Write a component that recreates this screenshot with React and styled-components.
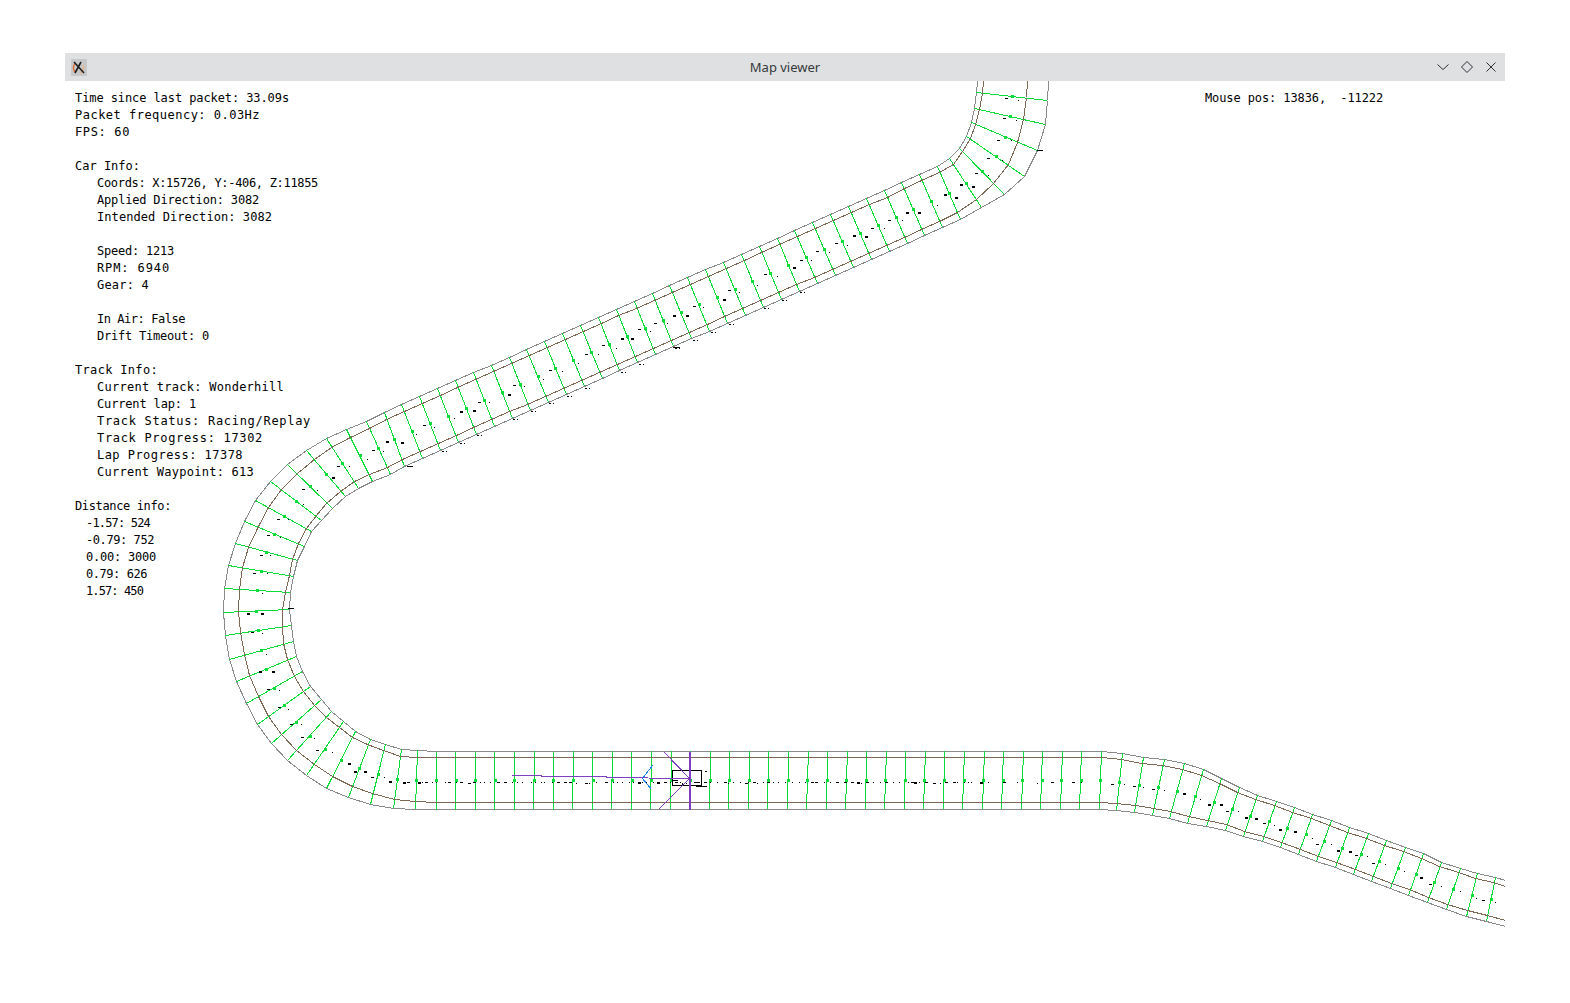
import React from 'react';
import styled, { createGlobalStyle } from 'styled-components';

const GlobalStyle = createGlobalStyle`
  html, body {
    margin: 0;
    padding: 0;
    background: #fff;
  }
`;

const Page = styled.div`
  width: 1570px;
  height: 1003px;
  padding: 53px 65px 0 65px;
  box-sizing: border-box;
  overflow: hidden;
`;

const Window = styled.div`
  display: flex;
  flex-direction: column;
  width: 1440px;
  height: 898px;
  background: #fff;
`;

const TitleBar = styled.div`
  display: flex;
  align-items: center;
  height: 28px;
  padding: 0 6px;
  background: #dee0e2;
  flex: none;
`;

const TitleSide = styled.div`
  display: flex;
  flex: 1;
  align-items: center;
  justify-content: ${p => (p.$end ? 'flex-end' : 'flex-start')};
  gap: 8px;
`;

const TitleIcon = styled.svg`
  width: 16px;
  height: 17px;
  flex: none;
`;

const Title = styled.div`
  font-family: "Noto Sans", sans-serif;
  font-size: 13px;
  color: #35393c;
`;

const ButtonIcon = styled.svg`
  width: 16px;
  height: 16px;
  fill: none;
  stroke: #2e3134;
  stroke-width: 1;
`;

const Canvas = styled.div`
  position: relative;
  flex: 1;
  display: flex;
  justify-content: space-between;
  align-items: flex-start;
  padding: 9px 122px 0 10px;
`;

const TrackLayer = styled.svg`
  position: absolute;
  left: 0;
  top: 0;
  width: 1440px;
  height: 870px;
  shape-rendering: crispEdges;
`;

const Hud = styled.div`
  position: relative;
  display: flex;
  flex-direction: column;
`;

const HudLine = styled.div`
  height: 17px;
  line-height: 17px;
  padding-left: ${p => p.$indent || 0}px;
  font-family: "DejaVu Sans Mono", monospace;
  font-size: 12px;
  color: #000;
  white-space: pre;
  letter-spacing: ${p => p.$spacing || 0}px;
`;

const CHAR_W = 7.224;

const hudLines = [
  ['Time since last packet: 33.09s', 0, 214],
  ['Packet frequency: 0.03Hz', 0, 185],
  ['FPS: 60', 0, 55],
  null,
  ['Car Info:', 0, 65],
  ['Coords: X:15726, Y:-406, Z:11855', 22, 221],
  ['Applied Direction: 3082', 22, 162],
  ['Intended Direction: 3082', 22, 175],
  null,
  ['Speed: 1213', 22, 77],
  ['RPM: 6940', 22, 73],
  ['Gear: 4', 22, 52],
  null,
  ['In Air: False', 22, 88],
  ['Drift Timeout: 0', 22, 112],
  null,
  ['Track Info:', 0, 83],
  ['Current track: Wonderhill', 22, 187],
  ['Current lap: 1', 22, 99],
  ['Track Status: Racing/Replay', 22, 214],
  ['Track Progress: 17302', 22, 166],
  ['Lap Progress: 17378', 22, 146],
  ['Current Waypoint: 613', 22, 157],
  null,
  ['Distance info:', 0, 96],
  ['-1.57: 524', 11, 64],
  ['-0.79: 752', 11, 68],
  ['0.00: 3000', 11, 70],
  ['0.79: 626', 11, 61],
  ['1.57: 450', 11, 57],
];

const spacingFor = (text, width) => width / text.length - CHAR_W;

// rungs: [ax, ay, bx, by, brown fraction from a, brown fraction from b]
const topCurve = [
  [976, 92.7, 1047.7, 100, 0.09, 0.3],
  [974.7, 108.3, 1045, 124.3, 0.07, 0.3],
  [971.7, 122.7, 1037.7, 150.7, 0.06, 0.31],
  [966.7, 136, 1024.3, 176, 0.07, 0.28],
  [959.3, 148.3, 1004.3, 194.3, 0.08, 0.23],
  [949.7, 158.7, 981.7, 207.7, 0.11, 0.17],
  [937.3, 166.7, 960.7, 219, 0.11, 0.13],
  [919.3, 174.3, 942.7, 227.7, 0.11, 0.12],
  [901.7, 182.3, 924.5, 235.5, 0.12, 0.12],
];

const line = (a, b, count) => {
  const rows = [];
  for (let i = 0; i < count; i++) {
    const t = i / (count - 1);
    rows.push([
      a[0] + (b[0] - a[0]) * t,
      a[1] + (b[1] - a[1]) * t,
      a[2] + (b[2] - a[2]) * t,
      a[3] + (b[3] - a[3]) * t,
      a[4],
      a[5],
    ]);
  }
  return rows;
};

const diagonal = line([884.3, 190.7, 907, 243.7, 0.12, 0.12], [384, 412.6, 404.7, 466, 0.12, 0.12], 29);

const leftCurve = [
  [366.7, 421.7, 390, 474, 0.13, 0.12],
  [346.7, 429.3, 372.7, 481, 0.15, 0.12],
  [326, 438.3, 358.3, 488.3, 0.18, 0.13],
  [306.7, 450.7, 345, 496.7, 0.2, 0.12],
  [287.7, 464.3, 332.3, 508.3, 0.22, 0.12],
  [270, 481, 321.7, 520, 0.23, 0.11],
  [255.7, 500, 311.7, 531.7, 0.23, 0.1],
  [244.3, 521, 304.3, 546, 0.23, 0.09],
  [235, 543.3, 297.7, 560.7, 0.22, 0.08],
  [228.3, 565, 293.3, 576.7, 0.22, 0.06],
  [224.3, 588.3, 290, 592.3, 0.23, 0.07],
  [223.3, 612.3, 289, 609.3, 0.23, 0.1],
  [225, 635, 291, 625.3, 0.23, 0.13],
  [229.3, 659, 293.3, 641.3, 0.23, 0.15],
  [236, 681.7, 296.7, 656, 0.23, 0.15],
  [246, 703.3, 302.7, 671.7, 0.22, 0.15],
  [257.3, 724, 310.7, 686, 0.21, 0.14],
  [271.7, 743.3, 321, 699.7, 0.2, 0.14],
  [287.7, 760, 331.7, 711.7, 0.2, 0.12],
  [306.7, 775.7, 343.3, 721.7, 0.2, 0.11],
  [326.7, 788.3, 355.7, 731, 0.2, 0.11],
  [348.3, 797.3, 370, 739, 0.18, 0.1],
  [370, 804, 385, 744.3, 0.17, 0.1],
  [393, 808, 401, 749, 0.14, 0.12],
  [415.3, 809, 417.3, 750.3, 0.13, 0.12],
];

const straight = line([436.3, 809, 436.3, 751, 0.12, 0.12], [1099, 809, 1101.5, 751, 0.12, 0.12], 35);

const rightBend = [
  [1116, 810, 1122.5, 753, 0.12, 0.12],
  [1134, 812, 1143, 757, 0.12, 0.12],
  [1152, 815, 1164, 759, 0.12, 0.12],
  [1169, 818, 1184, 763, 0.12, 0.12],
  [1187, 823, 1203, 769, 0.12, 0.12],
  [1206, 826, 1221, 778, 0.12, 0.12],
  [1225, 830, 1239, 787, 0.12, 0.12],
  [1243, 836, 1257, 795, 0.12, 0.12],
];

const rightRun = line([1262, 841, 1276, 801, 0.12, 0.12], [1390, 888, 1405, 847, 0.12, 0.12], 8);

const rightEnd = [
  [1408, 895, 1423, 853, 0.12, 0.12],
  [1427, 902, 1441.7, 862, 0.12, 0.12],
  [1446, 909, 1460, 868, 0.12, 0.12],
  [1466, 916, 1477, 873, 0.12, 0.12],
  [1486, 921, 1495, 877, 0.12, 0.12],
];

const drawnRungs = [
  ...topCurve,
  ...diagonal,
  ...leftCurve,
  ...straight,
  ...rightBend,
  ...rightRun,
  ...rightEnd,
];

const straightFrom = topCurve.length + diagonal.length + leftCurve.length;

const mix = (x0, y0, x1, y1, t) => [x0 + (x1 - x0) * t, y0 + (y1 - y0) * t];

// pixel centres, so lines land on one row of pixels as in the aliased original
const snap = v => Math.floor(v) + 0.5;

const toPoints = pts => pts.map(p => `${snap(p[0])},${snap(p[1])}`).join(' ');

// the edges run on past the first rung to the title bar, and to the window edge at the end
const grayA = [[977.5, 81], ...drawnRungs.map(r => [r[0], r[1]]), [1505, 926]];
const grayB = [[1048, 81], ...drawnRungs.map(r => [r[2], r[3]]), [1505, 880]];
const brownA = [[983, 81], ...drawnRungs.map(r => mix(r[0], r[1], r[2], r[3], r[4])), [1505, 920]];
const brownB = [[1027, 81], ...drawnRungs.map(r => mix(r[2], r[3], r[0], r[1], r[5])), [1505, 886]];

// seeded so the scatter of track samples stays the same on every load
let seed = 4127;
const rand = () => {
  seed = (seed * 16807) % 2147483647;
  return seed / 2147483647;
};

const buildDots = () => {
  const out = [];
  drawnRungs.forEach((r, i) => {
    if (i >= straightFrom && i < straightFrom + straight.length) return;
    const [mx, my] = mix(r[0], r[1], r[2], r[3], 0.5);
    const big = rand() > 0.75;
    if (rand() > 0.15) {
      out.push([mx - 5 - rand() * 4, my + 3 - rand() * 2, 3, big ? 2 : 1]);
    }
    out.push([mx + 4 + rand() * 3, my + 2 + rand() * 2, big ? 3 : 1, big ? 2 : 1]);
    if (i > 14 && i < 36 && rand() > 0.25) {
      out.push([r[2] + 1, r[3] + 1, 2, 1], [r[2] + 5, r[3] + 1, 1, 1]);
    }
  });
  for (let x = 418; x < 1100;) {
    const wide = rand();
    out.push([x, 782 + (rand() > 0.85 ? 1 : 0), wide > 0.5 ? 3 : 1, wide > 0.92 ? 2 : 1]);
    x += x > 970 ? 8 + rand() * 14 : 3 + rand() * 6;
  }
  return out;
};

const dots = buildDots();

const edgeDashes = [
  [1037, 150, 6],
  [288, 608, 6],
  [673, 347, 7],
  [407, 466, 6],
  [696, 786, 11],
  [705, 771, 2],
];

const App = () => (
  <Page>
    <GlobalStyle />
    <Window>
      <TitleBar>
        <TitleSide>
          <TitleIcon viewBox="0 0 16 17">
            <rect width="16" height="17" rx="1" fill="#c6c8ca" />
            <path d="M4 13 A6 6 0 0 1 5 4" fill="none" stroke="#e0703a" strokeWidth="1.5" />
            <path d="M12 6 A6 6 0 0 1 9 14" fill="none" stroke="#e8b48c" strokeWidth="1.5" />
            <path d="M3 3 L13 14 M4 14 L10 3" stroke="#1c1c1c" strokeWidth="1.6" fill="none" />
          </TitleIcon>
        </TitleSide>
        <Title>Map viewer</Title>
        <TitleSide $end>
          <ButtonIcon viewBox="0 0 16 16"><path d="M2.5 5.5 L8 10.5 L13.5 5.5" /></ButtonIcon>
          <ButtonIcon viewBox="0 0 16 16"><path d="M8 2.5 L13.5 8 L8 13.5 L2.5 8 Z" /></ButtonIcon>
          <ButtonIcon viewBox="0 0 16 16"><path d="M3.5 3.5 L12.5 12.5 M12.5 3.5 L3.5 12.5" /></ButtonIcon>
        </TitleSide>
      </TitleBar>
      <Canvas>
        <TrackLayer viewBox="65 81 1440 870">
          <polyline points={toPoints(grayA)} fill="none" stroke="#8a8a8a" />
          <polyline points={toPoints(grayB)} fill="none" stroke="#8a8a8a" />
          {drawnRungs.map((r, i) => (
            <line key={i} x1={snap(r[0])} y1={snap(r[1])} x2={snap(r[2])} y2={snap(r[3])} stroke="#0bdc3a" />
          ))}
          <polyline points={toPoints(brownA)} fill="none" stroke="#7d6a55" />
          <polyline points={toPoints(brownB)} fill="none" stroke="#7d6a55" />
          {drawnRungs.map((r, i) => {
            const [mx, my] = mix(r[0], r[1], r[2], r[3], 0.5);
            return <rect key={i} x={Math.round(mx - 1)} y={Math.round(my - 1)} width="3" height="3" fill="#0bdc3a" />;
          })}
          {dots.map((d, i) => (
            <rect key={i} x={Math.round(d[0])} y={Math.round(d[1])} width={d[2]} height={d[3]} fill="#000" />
          ))}
          {edgeDashes.map((d, i) => (
            <rect key={i} x={d[0]} y={d[1]} width={d[2]} height="1" fill="#000" />
          ))}
          <rect x="672.5" y="770.5" width="29" height="15" fill="none" stroke="#000" />
          <path d="M682.5 783 V785 M672 780.5 H678" stroke="#000" fill="none" />
          <polyline points="511.5,775.5 541.5,775.5 541.5,776.5 606.5,776.5 606.5,777.5 689.5,778.5" fill="none" stroke="#7f3fbf" />
          <path d="M664.5 752.5 L689.5 778.5 L658.5 809.5" fill="none" stroke="#7f3fbf" />
          <path d="M689.5 752 V810" stroke="#7f3fbf" strokeWidth="2" />
          <polyline points="652.5,765.5 642.5,778.5 651.5,789.5" fill="none" stroke="#1a82e6" />
        </TrackLayer>
        <Hud>
          {hudLines.map((row, i) => (row
            ? <HudLine key={i} $indent={row[1]} $spacing={spacingFor(row[0], row[2])}>{row[0]}</HudLine>
            : <HudLine key={i} />))}
        </Hud>
        <Hud>
          <HudLine $spacing={spacingFor('Mouse pos: 13836,  -11222', 178)}>Mouse pos: 13836,  -11222</HudLine>
        </Hud>
      </Canvas>
    </Window>
  </Page>
);

export default App;
